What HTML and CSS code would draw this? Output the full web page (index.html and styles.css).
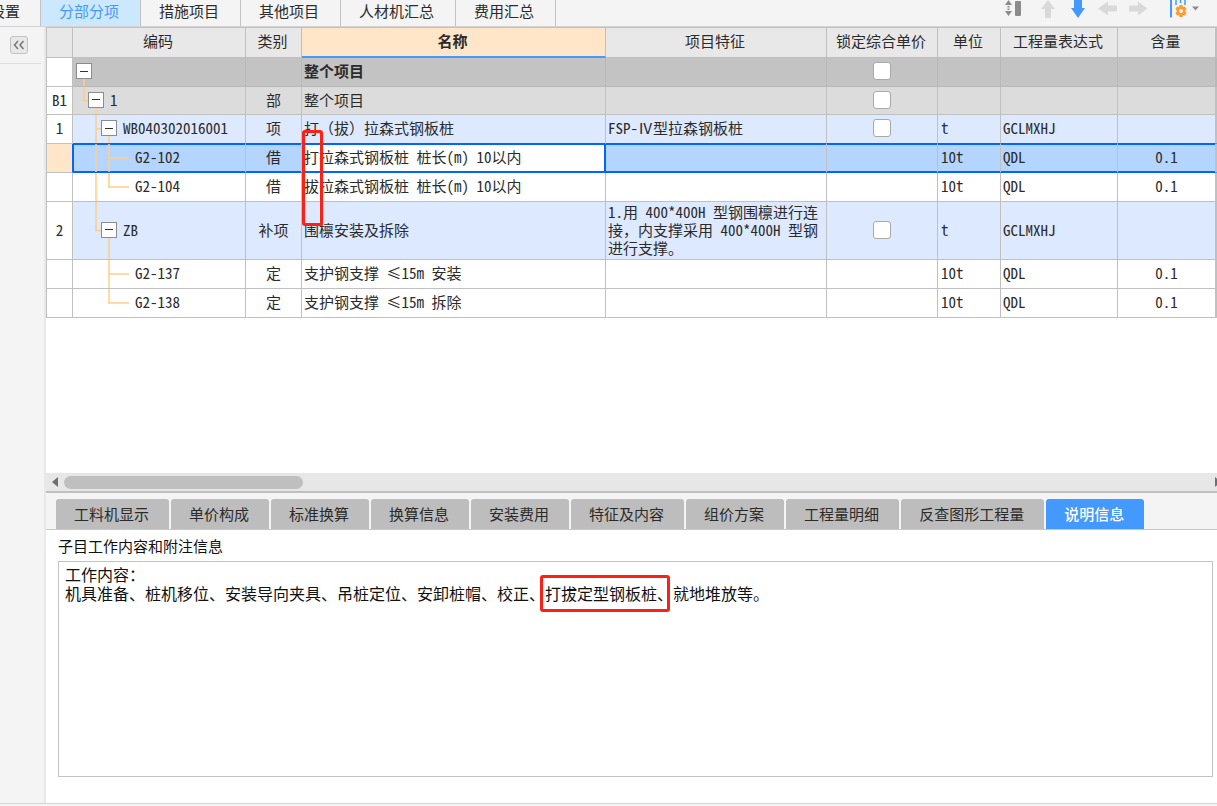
FILE: index.html
```html
<!DOCTYPE html>
<html lang="zh-CN">
<head>
<meta charset="utf-8">
<title>分部分项</title>
<link rel="stylesheet" href="styles.css">
</head>
<body>
<header class="topbar">
  <nav class="top-tabs">
    <button class="top-tab clipped"><span>设置</span></button>
    <button class="top-tab active">分部分项</button>
    <button class="top-tab">措施项目</button>
    <button class="top-tab">其他项目</button>
    <button class="top-tab">人材机汇总</button>
    <button class="top-tab">费用汇总</button>
  </nav>
  <div class="tools">
    <button class="tool tool-sort" aria-label="行高"><svg width="22" height="18" viewBox="0 0 22 18"><path d="M6.500 0 10 5H3zM3 11h7L6.500 16z" fill="#8c8c8c"/><path d="M6.500 6v1.500M6.500 8.500V10" stroke="#8c8c8c" stroke-width="2"/><rect x="13" y="1" width="6" height="15" rx="1" fill="#8c8c8c"/></svg></button>
    <button class="tool" aria-label="上移"><svg width="22" height="18" viewBox="0 0 22 18"><path d="M11 0 18 9h-4v9H8V9H4z" fill="#d9d9d9"/></svg></button>
    <button class="tool" aria-label="下移"><svg width="22" height="18" viewBox="0 0 22 18"><path d="M7 0h8v8h3l-7 10L4 8h3z" fill="#4499ff"/></svg></button>
    <button class="tool" aria-label="左移"><svg width="22" height="18" viewBox="0 0 22 18"><path d="M1 8.500 11 1.500v4h9v6h-9v4z" fill="#d9d9d9"/></svg></button>
    <button class="tool" aria-label="右移"><svg width="22" height="18" viewBox="0 0 22 18"><path d="M20.500 8.500 11 1.500v4H2v6h9v4z" fill="#d9d9d9"/></svg></button>
    <button class="tool tool-settings" aria-label="列设置"><svg width="32" height="18" viewBox="0 0 32 18"><path d="M4 0v17.500" stroke="#4499ff" stroke-width="2"/><path d="M9 0v5M13.500 0v3M18 0v5" stroke="#4499ff" stroke-width="1.500"/><path d="M12.500 5h3l.5 2 2-.5 1.500 2.500-1.500 2 1.500 2-1.500 2.500-2-.5-.5 2h-3l-.5-2-2 .5L8.500 13l1.500-2-1.500-2L10 6.500l2 .5z" fill="#ff9c2b"/><circle cx="14" cy="11" r="2" fill="#f4f4f4"/><path d="M25 6.500h7L28.500 10.500z" fill="#8c8c8c"/></svg></button>
  </div>
</header>
<div class="body">
  <aside class="side">
    <div class="side-head"><button class="collapse" aria-label="收起"><svg width="16" height="16" viewBox="0 0 16 16"><path d="M7 4 3.500 8 7 12M12.500 4 9 8l3.500 4" fill="none" stroke="#777" stroke-width="1.500"/></svg></button></div>
  </aside>
  <main class="main">
    <section class="grid-area">
      <table class="grid">
        <colgroup><col class="c-no"><col class="c-code"><col class="c-type"><col class="c-name"><col class="c-feature"><col class="c-lock"><col class="c-unit"><col class="c-expr"><col class="c-qty"><col class="c-rest"></colgroup>
        <thead><tr><th></th><th>编码</th><th>类别</th><th class="current">名称</th><th>项目特征</th><th>锁定综合单价</th><th>单位</th><th>工程量表达式</th><th>含量</th><th></th></tr></thead>
        <tbody>
          <tr class="total"><td></td><td class="code"><svg class="guides"><line x1="11" y1="50%" x2="11" y2="100%"/></svg><div class="node l1"><button class="toggle" aria-label="折叠"></button></div></td><td></td><td class="text">整个项目</td><td></td><td><input type="checkbox" aria-label="锁定综合单价"></td><td></td><td></td><td></td><td></td></tr>
          <tr class="section"><td>B1</td><td class="code"><svg class="guides"><line x1="11" y1="0" x2="11" y2="50%"/><line x1="10" y1="50%" x2="16" y2="50%"/><line x1="23" y1="50%" x2="23" y2="100%"/></svg><div class="node l2"><button class="toggle" aria-label="折叠"></button>1</div></td><td>部</td><td class="text">整个项目</td><td></td><td><input type="checkbox" aria-label="锁定综合单价"></td><td></td><td></td><td></td><td></td></tr>
          <tr class="item"><td>1</td><td class="code"><svg class="guides"><line x1="23" y1="0" x2="23" y2="100%"/><line x1="23" y1="50%" x2="29" y2="50%"/><line x1="36" y1="50%" x2="36" y2="100%"/></svg><div class="node l3"><button class="toggle" aria-label="折叠"></button>WB040302016001</div></td><td>项</td><td class="text">打（拔）拉森式钢板桩</td><td class="text">FSP-Ⅳ型拉森钢板桩</td><td><input type="checkbox" aria-label="锁定综合单价"></td><td class="text unit">t</td><td class="text">GCLMXHJ</td><td></td><td></td></tr>
          <tr class="selected"><td></td><td class="code"><svg class="guides"><line x1="23" y1="0" x2="23" y2="100%"/><line x1="36" y1="0" x2="36" y2="100%"/><line x1="36" y1="50%" x2="56" y2="50%"/></svg><div class="node l4">G2-102</div></td><td>借</td><td class="text editing">打拉森式钢板桩 桩长(m) 10以内</td><td></td><td></td><td class="text unit">10t</td><td class="text">QDL</td><td>0.1</td><td></td></tr>
          <tr><td></td><td class="code"><svg class="guides"><line x1="23" y1="0" x2="23" y2="100%"/><line x1="36" y1="0" x2="36" y2="50%"/><line x1="35" y1="50%" x2="56" y2="50%"/></svg><div class="node l4">G2-104</div></td><td>借</td><td class="text">拔拉森式钢板桩 桩长(m) 10以内</td><td></td><td></td><td class="text unit">10t</td><td class="text">QDL</td><td>0.1</td><td></td></tr>
          <tr class="item tall"><td>2</td><td class="code"><svg class="guides"><line x1="23" y1="0" x2="23" y2="50%"/><line x1="22" y1="50%" x2="29" y2="50%"/><line x1="36" y1="50%" x2="36" y2="100%"/></svg><div class="node l3"><button class="toggle" aria-label="折叠"></button>ZB</div></td><td>补项</td><td class="text">围檩安装及拆除</td><td class="text wrap">1.用 400*400H 型钢围檩进行连接，内支撑采用 400*400H 型钢进行支撑。</td><td><input type="checkbox" aria-label="锁定综合单价"></td><td class="text unit">t</td><td class="text">GCLMXHJ</td><td></td><td></td></tr>
          <tr><td></td><td class="code"><svg class="guides"><line x1="36" y1="0" x2="36" y2="100%"/><line x1="36" y1="50%" x2="56" y2="50%"/></svg><div class="node l4">G2-137</div></td><td>定</td><td class="text">支护钢支撑 ≤15m 安装</td><td></td><td></td><td class="text unit">10t</td><td class="text">QDL</td><td>0.1</td><td></td></tr>
          <tr><td></td><td class="code"><svg class="guides"><line x1="36" y1="0" x2="36" y2="50%"/><line x1="35" y1="50%" x2="56" y2="50%"/></svg><div class="node l4">G2-138</div></td><td>定</td><td class="text">支护钢支撑 ≤15m 拆除</td><td></td><td></td><td class="text unit">10t</td><td class="text">QDL</td><td>0.1</td><td></td></tr>
        </tbody>
      </table>
      <div class="mark mark-name"></div>
    </section>
    <div class="hscroll">
      <svg width="6" height="10" viewBox="0 0 6 10"><path d="M6 0v10L0 5z" fill="#6e6e78"/></svg>
      <div class="track"><div class="thumb"></div></div>
      <svg width="6" height="10" viewBox="0 0 6 10"><path d="M0 0v10l6-5z" fill="#6e6e78"/></svg>
    </div>
    <nav class="tabs">
      <button class="tab">工料机显示</button><button class="tab">单价构成</button><button class="tab">标准换算</button><button class="tab">换算信息</button><button class="tab">安装费用</button><button class="tab">特征及内容</button><button class="tab">组价方案</button><button class="tab">工程量明细</button><button class="tab">反查图形工程量</button><button class="tab active">说明信息</button>
    </nav>
    <section class="panel">
      <label for="notes">子目工作内容和附注信息</label>
      <div class="notes-wrap">
        <textarea id="notes" readonly>工作内容：
机具准备、桩机移位、安装导向夹具、吊桩定位、安卸桩帽、校正、打拔定型钢板桩、就地堆放等。</textarea>
        <div class="mark mark-note"></div>
      </div>
    </section>
  </main>
</div>
<footer class="status"></footer>
</body>
</html>
```
FILE: styles.css
```css
* { box-sizing: border-box; }
body {
  margin: 0;
  height: 100vh;
  display: flex;
  flex-direction: column;
  overflow: hidden;
  background: #f4f4f4;
  color: #2b2b2b;
  font: 15px/20px "Noto Sans CJK SC", sans-serif;
}
button, textarea { font: inherit; color: inherit; }
button { border: 0; padding: 0; background: none; white-space: nowrap; }
svg { display: block; }

.topbar { display: flex; justify-content: space-between; height: 27px; flex: none; border-bottom: 1px solid #d4d4d4; }
.top-tabs { display: flex; }
.top-tab { height: 26px; padding: 0 21px 5px 18px; border-right: 1px solid #c3c3c3; }
.top-tab.clipped { width: 41px; padding-right: 20px; display: flex; justify-content: flex-end; align-items: center; overflow: hidden; }
.top-tab.active { background: #cce8ff; color: #4499ff; }
.tools { display: flex; align-items: flex-start; gap: 8px; padding-right: 18px; }
.tool-sort { margin-right: 5px; }
.tool-settings { margin-left: 10px; }

.body { display: flex; flex: 1; min-height: 0; }
.side { width: 46px; flex: none; border-right: 2px solid #e8e8e8; }
.side-head { height: 37px; width: 41px; padding: 9px 0 0 10px; border-bottom: 1px solid #dcdcdc; }
.collapse { width: 18px; height: 18px; border: 1px solid #c3c3c3; border-radius: 3px; background: #e8e8e8; }
.main { flex: 1; min-width: 0; display: flex; flex-direction: column; background: #fff; }

.grid-area { position: relative; flex: 1; min-height: 0; overflow: hidden; }
.grid { width: 100%; table-layout: fixed; border-collapse: separate; border-spacing: 0; border-left: 1px solid #c0c0c0; border-top: 1px solid #c0c0c0; }
.c-no { width: 26px; }
.c-code { width: 173px; }
.c-type { width: 56px; }
.c-name { width: 304px; }
.c-lock { width: 111px; }
.c-unit { width: 63px; }
.c-expr { width: 117px; }
.c-qty { width: 98px; }
.c-rest { width: 1px; }
.grid th, .grid td { padding: 0 0 2px; border-right: 1px solid #c0c0c0; border-bottom: 1px solid #c0c0c0; text-align: center; white-space: nowrap; overflow: hidden; }
.grid th { height: 30px; padding: 0 2px 3px 0; background: #e8e8e8; font-weight: 400; }
.grid th:last-child { padding-right: 0; }
.grid th.current { background: #ffe6c8; font-weight: 700; border-bottom: 2px solid #4499ff; }
.grid td { height: 29px; line-height: 18px; font-family: "Noto Sans Mono CJK SC", "Noto Sans CJK SC", monospace; }
.grid .section td { height: 28px; }
.grid .tall td { height: 58px; }
.grid td.text { text-align: left; padding-left: 2px; }
.grid td.unit { padding-left: 3px; }
.grid td.wrap { white-space: normal; padding-right: 4px; }
.total td:not(:first-child) { background: #c3c3c3; border-bottom-color: #b8b8b8; border-right-color: #b8b8b8; }
.total td.text { font-weight: 700; }
.section td:not(:first-child) { background: #dcdcdc; }
.item td:not(:first-child) { background: #dde9ff; }
.selected td:first-child { background: #ffe6c8; border-right-color: #0066ff; }
.selected td:not(:first-child) { background: #b3d5ff; border-bottom-color: #0066ff; box-shadow: inset 0 1px #0066ff, inset 0 -1px #0066ff; }
tr:has(+ .selected) td:not(:first-child) { border-bottom-color: #0066ff; }
.grid .selected td.code { box-shadow: inset 1px 1px #0066ff, inset 0 -1px #0066ff; }
.grid .selected td.editing { background: #fff; border-right-color: #0066ff; box-shadow: inset -1px 1px #0066ff, inset 0 -1px #0066ff; }

.code { position: relative; }
.guides { position: absolute; left: 0; top: 0; width: 60px; height: 100%; }
.guides line { stroke: #ffcc88; stroke-width: 1.500; }
.node { position: relative; display: flex; align-items: center; gap: 6px; }
.l1 { padding-left: 3px; }
.l2 { padding-left: 15px; }
.l3 { padding-left: 28px; }
.l4 { padding-left: 62px; }
.toggle { width: 16px; height: 16px; border: 1px solid #8c8c8c; background: #fff; display: flex; align-items: center; justify-content: center; }
.toggle::before { content: ""; width: 8px; height: 1px; background: #333; }
input[type="checkbox"] { appearance: none; display: block; width: 18px; height: 18px; margin: 0 auto; border: 1px solid #a8a8a8; border-radius: 3px; background: #fff; }

.mark { position: absolute; border: 3px solid #ff2015; border-radius: 3px; pointer-events: none; }
.mark-name { left: 256px; top: 103px; width: 21px; height: 96px; }
.mark-note { left: 482px; top: 14px; width: 130px; height: 37px; }

.hscroll { display: flex; align-items: center; gap: 6px; height: 20px; flex: none; padding-left: 6px; background: #e7e7e7; border-bottom: 2px solid #c0c0c0; overflow: hidden; }
.hscroll svg { flex: none; }
.hscroll svg:last-child { margin-right: -4px; }
.track { flex: 1; }
.thumb { width: 239px; height: 13px; border-radius: 7px; background: #bfbfbf; }

.tabs { display: flex; align-items: flex-end; gap: 2px; height: 37px; flex: none; padding-left: 10px; background: #f4f4f4; border-bottom: 1px solid #c8c8c8; }
.tab { height: 30px; padding: 0 20px 0 18px; border-radius: 3px 3px 0 0; background: #bdbdbd; }
.tab.active { background: #4499ff; color: #fff; font-weight: 500; }
.panel { flex: none; padding: 6px 4px 26px 12px; color: #111; }
.panel label { display: block; line-height: 20px; margin-bottom: 5px; }
.notes-wrap { position: relative; }
textarea { display: block; width: 100%; height: 216px; margin: 0; padding: 3px 6px; border: 1px solid #c3c3c3; background: #fff; resize: none; outline: 0; font-size: 16px; line-height: 19px; }
.status { height: 3px; flex: none; border-top: 1px solid #d4d4d4; }
```
